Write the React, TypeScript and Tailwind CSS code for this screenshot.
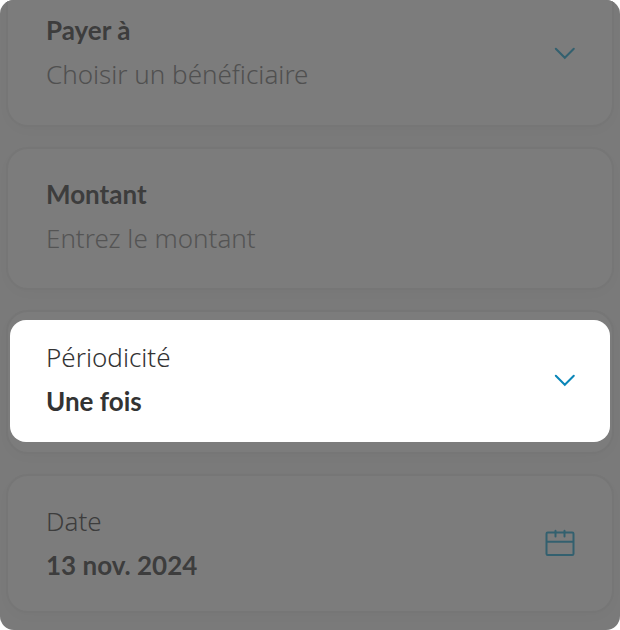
import { useState } from "react";
import type { ReactNode } from "react";

const value = "col-start-1 row-start-2 h-11 w-full min-w-0 appearance-none border-0 bg-transparent p-0 leading-[44px] outline-none";
const strong = "font-['Lato','Noto_Sans',sans-serif] font-bold";
const thin = "font-['Noto_Sans','Open_Sans',sans-serif] font-light";

function Chevron({ className }: { className: string }) {
  return (
    <svg className={"col-start-2 row-span-2 row-start-1 " + className} width="22" height="16" viewBox="0 0 22 16" fill="none" stroke="currentColor" strokeWidth="2" strokeLinecap="round" aria-hidden="true">
      <path d="M1.8 4.8 L10.8 13.8 L19.8 4.8" />
    </svg>
  );
}

function Calendar() {
  return (
    <svg width="30" height="28" viewBox="0 0 30 28" fill="none" stroke="currentColor" strokeWidth="2" aria-hidden="true">
      <rect x="1.5" y="3.6" width="27" height="22.4" rx="1.2" />
      <path d="M1.5 12.8 H28.5" />
      <path d="M10.5 1.8 V7.4 M19.5 1.8 V7.4" strokeLinecap="round" />
    </svg>
  );
}

function Card({ className, children }: { className: string; children: ReactNode }) {
  return (
    <div className={"border-[#767676] bg-[#7c7c7c] shadow-[0_4px_12px_rgba(0,0,0,0.02)] " + className}>
      {children}
    </div>
  );
}

export default function App() {
  const [amount, setAmount] = useState("");
  const [date, setDate] = useState("13 nov. 2024");
  const grid = "grid grid-cols-[minmax(0,1fr)_auto] items-center";
  return (
    <form className="flex flex-col gap-5 overflow-hidden rounded-[14px] bg-[#7a7a7a] px-1.5 pb-[17px] text-[26px] leading-[44px] text-[#3d3d3d]">
      <Card className={grid + " rounded-b-[22px] border-2 border-t-0 pt-2 pr-9 pb-[29px] pl-[38px]"}>
        <label htmlFor="payee" className={strong}>Payer à</label>
        <select id="payee" className={value + " text-[#505050] " + thin}>
          <option>Choisir un bénéficiaire</option>
        </select>
        <Chevron className="text-[#33606f]" />
      </Card>

      <Card className="grid rounded-[22px] border-2 pt-[23px] pr-9 pb-7 pl-[38px]">
        <label htmlFor="amount" className={strong}>Montant</label>
        <input
          id="amount"
          value={amount}
          onChange={(e) => setAmount(e.target.value)}
          placeholder="Entrez le montant"
          className={value + " text-[#3d3d3d] placeholder:text-[#545454] " + thin}
        />
      </Card>

      <Card className="rounded-[22px] border-2 px-0.5 pt-2 pb-2.5">
        <div className={grid + " rounded-[16px] bg-white pt-[15px] pr-[34px] pb-[19px] pl-9 text-[#333333]"}>
          <label htmlFor="frequency" className={thin}>Périodicité</label>
          <select id="frequency" className={value + " " + strong}>
            <option>Une fois</option>
          </select>
          <Chevron className="text-[#0a86b8]" />
        </div>
      </Card>

      <Card className={grid + " rounded-[22px] border-2 pt-[23px] pr-[37px] pb-6 pl-[38px]"}>
        <label htmlFor="date" className={thin}>Date</label>
        <input id="date" value={date} onChange={(e) => setDate(e.target.value)} className={value + " " + strong} />
        <button type="button" aria-label="Choisir une date" className="col-start-2 row-span-2 row-start-1 text-[#33606f]">
          <Calendar />
        </button>
      </Card>
    </form>
  );
}
